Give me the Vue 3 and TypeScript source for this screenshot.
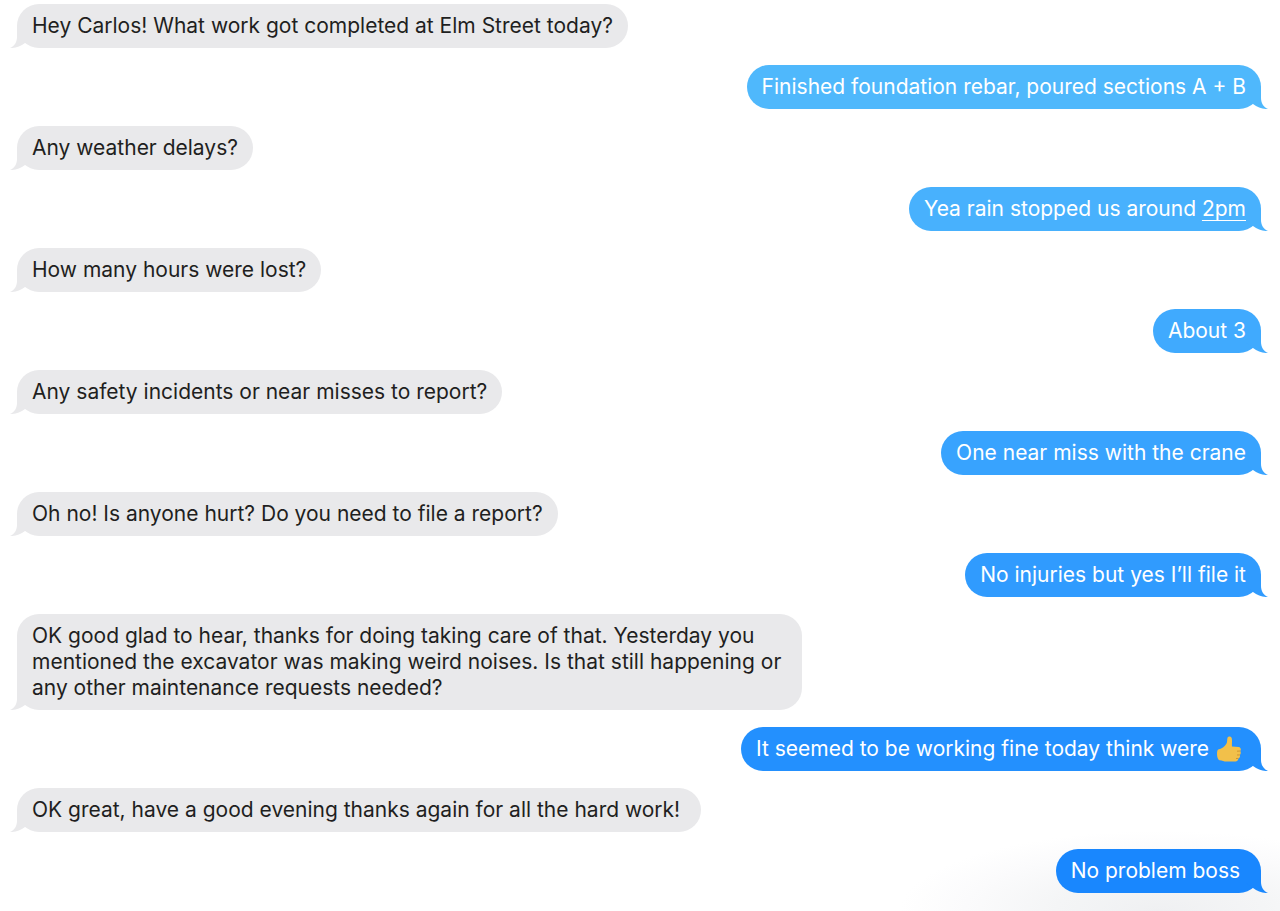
<script setup lang="ts">
interface Message {
  sent: boolean
  text: string
  link?: string
  thumb?: boolean
  tone?: string
}

const messages: Message[] = [
  { sent: false, text: 'Hey Carlos! What work got completed at Elm Street today?' },
  { sent: true, text: 'Finished foundation rebar, poured sections A + B', tone: '#4fb8fc' },
  { sent: false, text: 'Any weather delays?' },
  { sent: true, text: 'Yea rain stopped us around ', link: '2pm', tone: '#48b1fd' },
  { sent: false, text: 'How many hours were lost?' },
  { sent: true, text: 'About 3', tone: '#40aafe' },
  { sent: false, text: 'Any safety incidents or near misses to report?' },
  { sent: true, text: 'One near miss with the crane', tone: '#38a3fe' },
  { sent: false, text: 'Oh no! Is anyone hurt? Do you need to file a report?' },
  { sent: true, text: 'No injuries but yes I’ll file it', tone: '#309bfe' },
  {
    sent: false,
    text: 'OK good glad to hear, thanks for doing taking care of that. Yesterday you mentioned the excavator was making weird noises. Is that still happening or any other maintenance requests needed?',
  },
  { sent: true, text: 'It seemed to be working fine today think were ', thumb: true, tone: '#2390fe' },
  { sent: false, text: 'OK great, have a good evening thanks again for all the hard work!\u00a0' },
  { sent: true, text: 'No problem boss\u00a0', tone: '#1987fe' },
]
</script>

<template>
  <main class="conversation">
    <ol class="thread">
      <li v-for="(m, i) in messages" :key="i" class="row" :class="{ sent: m.sent }">
        <div class="bubble" :style="{ '--tone': m.tone }">
          <svg class="tail" viewBox="0 0 22 22" aria-hidden="true">
            <path d="M7 0V11C7 16 4.5 20 0 22C5 22.3 10.5 20.5 15 17L22 12V0Z" />
          </svg>
          <p class="text">{{ m.text }}<a v-if="m.link" class="time" href="#">{{ m.link }}</a><svg v-if="m.thumb" class="thumb" viewBox="0 0 26 26" role="img" aria-label="Thumbs up">
            <path class="skin" d="M11.7 1.2C12.5-.1 15.4 .2 15.8 2.4C16.3 5 15.7 7.7 16 10.5L22.6 11C25 11.3 25.4 14 24.2 15C25.1 16.2 24.9 18.4 23.8 18.9C24.5 20.3 23.7 22.1 22.4 22.4C22.2 24.6 20.4 25.5 18.2 25.5H10.5C8 25.5 6.2 24.4 3.6 24.2C.8 23.7 .2 14.8 2.2 13.5C5.6 12.5 8.8 10.8 10.4 7.7C11.6 5.7 10.8 3 11.7 1.2Z" />
            <path class="crease" d="M21 15.2L24.2 15M21 19L23.8 18.9M20 22.5L22.4 22.4" />
          </svg></p>
        </div>
      </li>
    </ol>
  </main>
</template>

<style>
body {
  margin: 0;
  background: #fff;
}
</style>

<style scoped>
.conversation {
  box-sizing: border-box;
  min-height: 100vh;
  padding: 4px 19px 18px 17px;
  background: radial-gradient(ellipse 260px 80px at calc(100% - 120px) 100%, #eff0f2 0%, #f4f5f6 40%, #fbfbfc 75%, #fff 100%);
  font-family: Inter, "Liberation Sans", sans-serif;
  font-size: 21px;
  line-height: 26px;
  color: #1f1f21;
}

.thread {
  display: flex;
  flex-direction: column;
  gap: 17px;
  margin: 0;
  padding: 0;
  list-style: none;
}

.row {
  display: flex;
}

.row.sent {
  justify-content: flex-end;
}

.bubble {
  --tone: #e9e9eb;
  position: relative;
  box-sizing: border-box;
  max-width: 63.1%;
  padding: 9px 15px;
  border-radius: 22px;
  background: var(--tone);
}

.sent .bubble {
  color: #fff;
}

.tail {
  position: absolute;
  bottom: 0;
  left: -7px;
  width: 22px;
  height: 22px;
  fill: var(--tone);
}

.sent .tail {
  right: -7px;
  left: auto;
  transform: scaleX(-1);
}

.text {
  position: relative;
  margin: 0;
}

.time {
  color: inherit;
  text-decoration: underline;
  text-decoration-thickness: 1px;
  text-underline-offset: 4px;
}

.thumb {
  width: 26px;
  height: 26px;
  margin: 0 4px 0 1px;
  vertical-align: bottom;
}

.skin {
  fill: #f2c04a;
}

.crease {
  fill: none;
  stroke: #cf9432;
  stroke-width: 1;
}
</style>
